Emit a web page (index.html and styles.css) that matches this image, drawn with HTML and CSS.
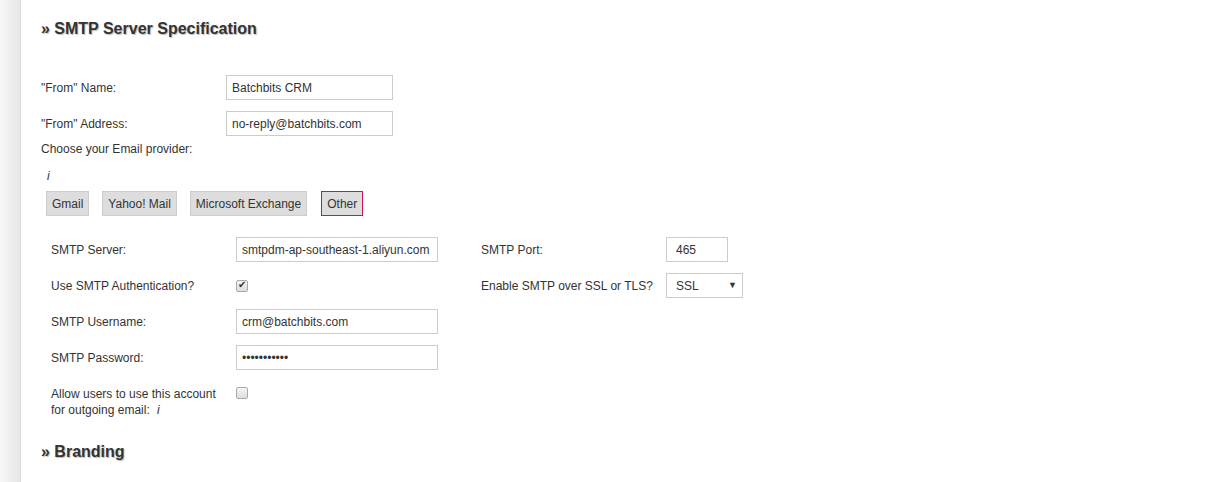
FILE: index.html
```html
<!DOCTYPE html>
<html lang="en">
<head>
    <meta charset="UTF-8">
    <title>SMTP Server Specification</title>
    <link rel="stylesheet" href="styles.css">
</head>
<body>
    <div class="page">
        <div class="side-strip"></div>
        <div class="content">
            <h2 class="section-title">&raquo; SMTP Server Specification</h2>

            <div class="from-rows">
                <div class="form-row">
                    <label class="from-label">"From" Name:</label>
                    <input type="text" class="text-input from-input" value="Batchbits CRM">
                </div>
                <div class="form-row">
                    <label class="from-label">"From" Address:</label>
                    <input type="text" class="text-input from-input" value="no-reply@batchbits.com">
                </div>
            </div>

            <div class="provider-label">Choose your Email provider:</div>
            <div class="info-mark">i</div>

            <div class="provider-buttons">
                <button type="button" class="provider-button">Gmail</button>
                <button type="button" class="provider-button">Yahoo! Mail</button>
                <button type="button" class="provider-button">Microsoft Exchange</button>
                <button type="button" class="provider-button active">Other</button>
            </div>

            <div class="smtp-grid">
                <div class="cell-label">SMTP Server:</div>
                <div class="cell-field"><input type="text" class="text-input server-input" value="smtpdm-ap-southeast-1.aliyun.com"></div>
                <div class="cell-label">SMTP Port:</div>
                <div class="cell-field"><input type="text" class="text-input port-input" value="465"></div>

                <div class="cell-label">Use SMTP Authentication?</div>
                <div class="cell-field"><input type="checkbox" class="check" checked></div>
                <div class="cell-label">Enable SMTP over SSL or TLS?</div>
                <div class="cell-field">
                    <div class="select-wrap">
                        <select class="ssl-select">
                            <option>SSL</option>
                            <option>TLS</option>
                            <option>None</option>
                        </select>
                    </div>
                </div>

                <div class="cell-label">SMTP Username:</div>
                <div class="cell-field"><input type="text" class="text-input server-input" value="crm@batchbits.com"></div>
                <div class="cell-label"></div>
                <div class="cell-field"></div>

                <div class="cell-label">SMTP Password:</div>
                <div class="cell-field"><input type="password" class="text-input server-input" value="xxxxxxxxxxx"></div>
                <div class="cell-label"></div>
                <div class="cell-field"></div>

                <div class="cell-label multi">Allow users to use this account<br>for outgoing email: <span class="info-inline">i</span></div>
                <div class="cell-field top"><input type="checkbox" class="check"></div>
                <div class="cell-label"></div>
                <div class="cell-field"></div>
            </div>

            <h2 class="section-title branding">&raquo; Branding</h2>
        </div>
    </div>
</body>
</html>
```

FILE: styles.css
```css
body {
    margin: 0;
    font-family: "Liberation Sans", Arial, sans-serif;
    font-size: 12px;
    color: #333;
    background: #fff;
}
.page {
    display: flex;
    min-height: 482px;
}
.side-strip {
    width: 20px;
    flex-shrink: 0;
    background: linear-gradient(to right, #f7f7f7, #e6e6e6);
    border-right: 1px solid #dcdcdc;
}
.content {
    flex: 1;
    padding-left: 20px;
}
.section-title {
    margin: 0;
    padding-top: 19px;
    font-size: 16px;
    line-height: 20px;
    font-weight: bold;
    color: #333;
    text-shadow: 1px 1px 1px #bbb;
}
.section-title.branding {
    padding-top: 36px;
}
.from-rows {
    margin-top: 36px;
    display: flex;
    flex-direction: column;
    gap: 11px;
}
.form-row {
    display: flex;
    align-items: center;
    height: 25px;
}
.from-label {
    width: 185px;
}
.text-input {
    box-sizing: border-box;
    height: 25px;
    border: 1px solid #ccc;
    padding: 0 5px;
    font-family: "Liberation Sans", Arial, sans-serif;
    font-size: 12px;
    color: #333;
    background: #fff;
    margin: 0;
}
.from-input {
    width: 167px;
}
.provider-label {
    margin-top: 6px;
    line-height: 14px;
}
.info-mark {
    margin-top: 13px;
    margin-left: 6px;
    line-height: 14px;
    font-style: italic;
}
.provider-buttons {
    display: flex;
    gap: 13px;
    margin-top: 8px;
    margin-left: 5px;
}
.provider-button {
    height: 25px;
    padding: 0 5px;
    border: 1px solid #ccc;
    background: #ddd;
    font-family: "Liberation Sans", Arial, sans-serif;
    font-size: 12px;
    color: #333;
    cursor: pointer;
}
.provider-button.active {
    margin-left: 1px;
    border-color: #d0105a;
}
.smtp-grid {
    display: grid;
    grid-template-columns: 185px 245px 185px auto;
    grid-auto-rows: 25px;
    row-gap: 11px;
    margin-top: 21px;
    margin-left: 10px;
}
.cell-label {
    display: flex;
    align-items: center;
}
.cell-label.multi {
    display: block;
    padding-top: 5px;
    line-height: 16px;
    white-space: nowrap;
}
.info-inline {
    font-style: italic;
    margin-left: 4px;
}
.cell-field {
    display: flex;
    align-items: center;
}
.cell-field.top {
    align-items: flex-start;
    padding-top: 6px;
}
.server-input {
    width: 202px;
}
.port-input {
    width: 62px;
    padding-left: 9px;
}
.check {
    appearance: none;
    -webkit-appearance: none;
    box-sizing: border-box;
    width: 12px;
    height: 12px;
    margin: 0;
    border: 1px solid #aaa;
    border-radius: 2px;
    background: linear-gradient(#f4f4f4, #dedede);
    position: relative;
}
.check:checked::after {
    content: "\2714";
    position: absolute;
    left: 1px;
    top: -2px;
    font-size: 10px;
    color: #333;
}
.select-wrap {
    position: relative;
    width: 77px;
}
.ssl-select {
    appearance: none;
    -webkit-appearance: none;
    box-sizing: border-box;
    width: 77px;
    height: 25px;
    border: 1px solid #ccc;
    background: #fff;
    padding: 0 9px;
    font-family: "Liberation Sans", Arial, sans-serif;
    font-size: 12px;
    color: #333;
    margin: 0;
}
.select-wrap::after {
    content: "\25BC";
    position: absolute;
    right: 6px;
    top: 7px;
    font-size: 9px;
    color: #333;
    pointer-events: none;
}
```
